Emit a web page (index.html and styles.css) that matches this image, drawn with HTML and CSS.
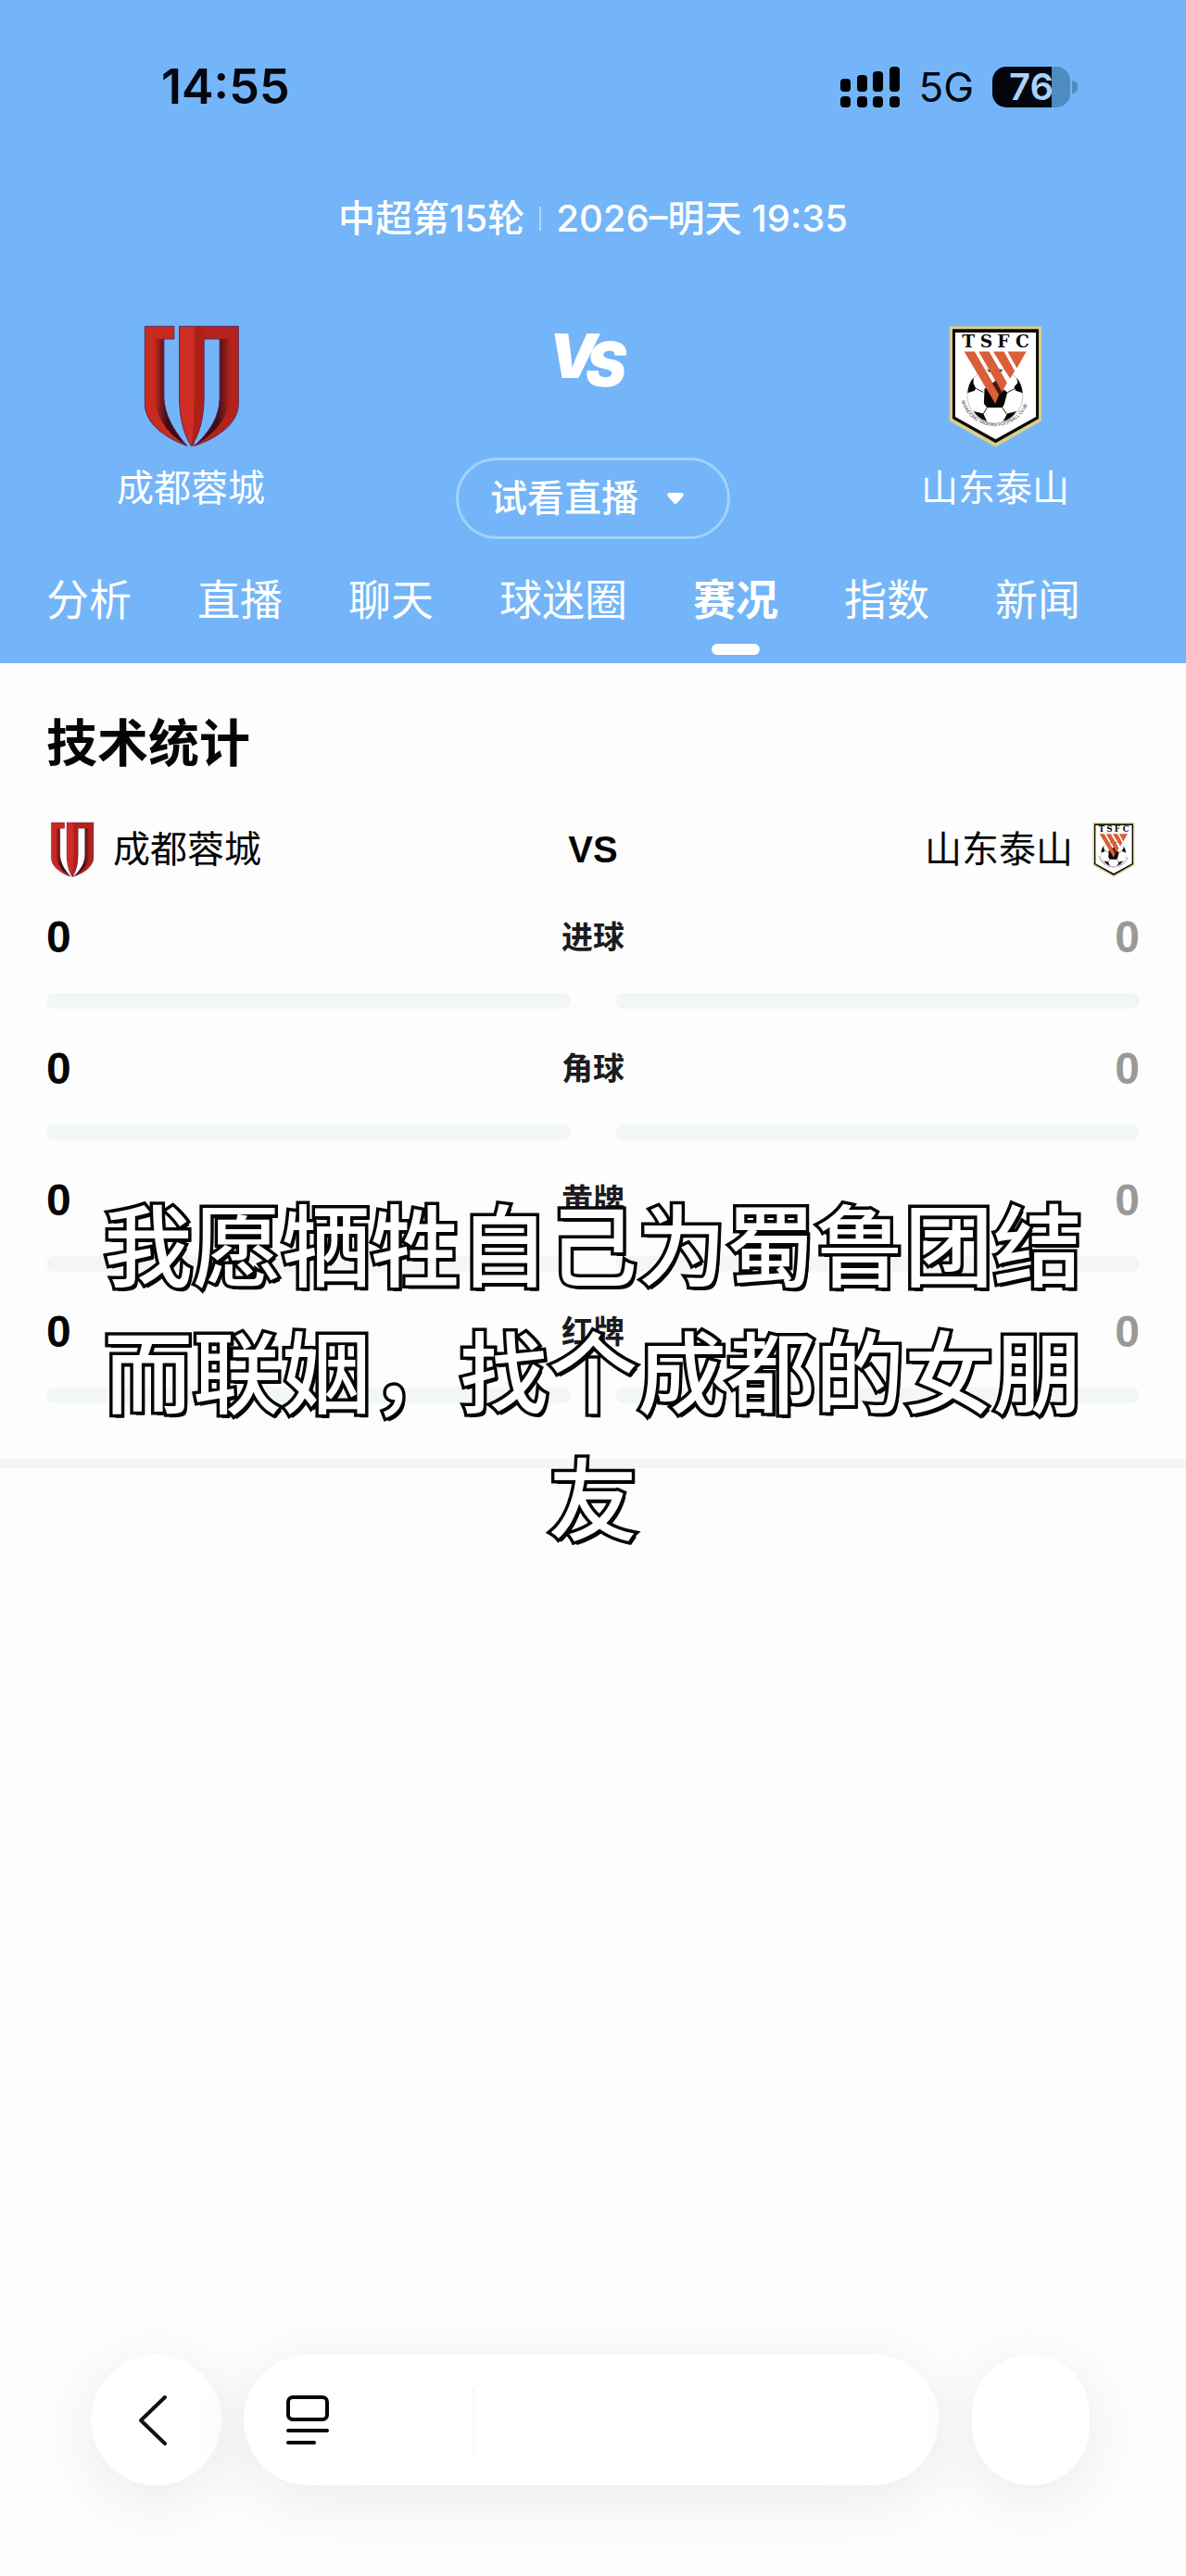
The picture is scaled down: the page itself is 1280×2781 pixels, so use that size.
FILE: index.html
```html
<!DOCTYPE html>
<html lang="zh-CN">
<head>
<meta charset="utf-8">
<meta name="viewport" content="width=device-width, initial-scale=1">
<title>成都蓉城 VS 山东泰山</title>
<link rel="stylesheet" href="styles.css">
</head>
<body>
<svg class="defs" aria-hidden="true">
  <defs>
    <linearGradient id="redLeft" gradientUnits="userSpaceOnUse" x1="200" y1="0" x2="240" y2="0"><stop offset="0" stop-color="#c3281f"/><stop offset="1" stop-color="#3c0d1a"/></linearGradient>
    <linearGradient id="redRight" gradientUnits="userSpaceOnUse" x1="405" y1="0" x2="446" y2="0"><stop offset="0" stop-color="#3c0d1a"/><stop offset="1" stop-color="#b4231b"/></linearGradient>
    <symbol id="crest-chengdu" viewBox="160 60 320 400">
      <path d="M169 67H264V108H231V300C234 355 262 405 306 455C238 430 169 385 169 318Z" fill="#c82a20"/>
      <path d="M200 108H231V300C234 355 262 405 306 455C256 425 207 375 200 300Z" fill="url(#redLeft)"/>
      <path d="M281 67H473V318C473 385 400 432 330 455C385 405 411 355 412 300V108H361V300C360 370 345 420 320 456C297 420 282 370 281 300Z" fill="#b4231b"/>
      <path d="M281 67H330V456H320C297 420 282 370 281 300Z" fill="#cf2d23"/>
      <path d="M330 67H361V300C360 370 345 420 320 456C328 400 330 350 330 300Z" fill="#ae2018"/>
      <path d="M412 108H446V300C440 365 392 420 330 455C385 405 411 355 412 300Z" fill="url(#redRight)"/>
      <path d="M169 67H264V108H231V300C234 355 262 405 306 455C238 430 169 385 169 318ZM281 67H473V318C473 385 400 432 330 455C385 405 411 355 412 300V108H361V300C360 370 345 420 320 456C297 420 282 370 281 300Z" fill="none" stroke="#5b2a5e" stroke-width="3"/>
    </symbol>
    <symbol id="crest-shandong" viewBox="180 60 320 400">
      <path d="M190 67H489V374L340 459L190 374Z" fill="#d9cf8e"/>
      <path d="M200 76H480V367L340 446L200 367Z" fill="#0c0707"/>
      <path d="M209 87H471V361L340 434L209 361Z" fill="#fff"/>
      <text x="231 290 345 405" y="135" class="crest-name">TSFC</text>
      <circle cx="338" cy="292" r="90" fill="#fff" stroke="#555" stroke-width="1"/>
      <path d="M312 210Q338 202 364 210L350 217H325ZM268 234Q252 252 249 283L272 276 276 268 268 252ZM408 234Q424 252 428 283L405 276 400 264 412 250ZM304 270L326 255 372 276 378 282 368 320 362 331H312L302 318ZM268 343L300 350 312 376Q286 368 268 343ZM408 343L378 350 364 376Q392 368 408 343Z" fill="#080505"/>
      <path d="M276 268L300 281M378 282L405 268M312 331L300 352M362 331L376 352" stroke="#222" stroke-width="3"/>
      <path d="M238 149H272L352 287 339 318ZM285 149H319L377 250 361 282ZM332 149H367L402 212 387 237ZM379 149H440L409 203Z" fill="#d95f38"/>
      <path d="M329 252L341 243 361 282 352 291Z" fill="#4a1712"/>
      <path id="crest-arc" d="M229 308A113 113 0 0 0 447 308" fill="none"/>
      <text class="crest-ring"><textPath href="#crest-arc">SHANDONG TAISHAN FOOTBALL CLUB</textPath></text>
    </symbol>
  </defs>
</svg>

<header class="hero">
  <div class="status">
    <time class="clock">14:55</time>
    <div class="status-icons">
      <svg class="signal" viewBox="0 0 64 44" aria-hidden="true"><rect x="0" y="13" width="11" height="14" rx="4"/><rect x="18" y="9" width="11" height="18" rx="4"/><rect x="35" y="5" width="11" height="22" rx="4"/><rect x="53" y="0" width="11" height="27" rx="4"/><rect x="0" y="32" width="11" height="12" rx="4"/><rect x="18" y="32" width="11" height="12" rx="4"/><rect x="35" y="32" width="11" height="12" rx="4"/><rect x="53" y="32" width="11" height="12" rx="4"/></svg>
      <span class="network">5G</span>
      <span class="battery"><span class="battery-cell">76</span><span class="battery-tip"></span></span>
    </div>
  </div>

  <p class="fixture"><span>中超第15轮</span><i class="fixture-rule"></i><span>2026–明天 19:35</span></p>

  <div class="match">
    <div class="team">
      <svg class="crest"><use href="#crest-chengdu"/></svg>
      <span>成都蓉城</span>
    </div>
    <div class="versus">
      <svg class="versus-mark" viewBox="0 0 100 80" role="img" aria-label="VS"><text x="2" y="58">V</text><text x="42" y="67">S</text></svg>
      <button class="watch" type="button">试看直播<svg class="caret" viewBox="0 0 20 14" aria-hidden="true"><path d="M3 1H17Q20 2 18 5L12 12Q10 14 8 12L2 5Q0 2 3 1Z"/></svg></button>
    </div>
    <div class="team">
      <svg class="crest"><use href="#crest-shandong"/></svg>
      <span>山东泰山</span>
    </div>
  </div>

  <nav class="tabs">
    <a href="#">分析</a><a href="#">直播</a><a href="#">聊天</a><a href="#">球迷圈</a><a href="#" class="active" aria-current="page">赛况</a><a href="#">指数</a><a href="#">新闻</a>
  </nav>
</header>

<main class="stats">
  <h1>技术统计</h1>
  <div class="sides">
    <div class="side"><svg class="crest-small"><use href="#crest-chengdu"/></svg><span>成都蓉城</span></div>
    <strong>VS</strong>
    <div class="side side-away"><span>山东泰山</span><svg class="crest-small"><use href="#crest-shandong"/></svg></div>
  </div>
  <div class="stat"><b>0</b><span>进球</span><b class="away">0</b><i class="bar"></i><i class="bar"></i></div>
  <div class="stat"><b>0</b><span>角球</span><b class="away">0</b><i class="bar"></i><i class="bar"></i></div>
  <div class="stat"><b>0</b><span>黄牌</span><b class="away">0</b><i class="bar"></i><i class="bar"></i></div>
  <div class="stat"><b>0</b><span>红牌</span><b class="away">0</b><i class="bar"></i><i class="bar"></i></div>
  <p class="caption">我愿牺牲自己为蜀鲁团结而联姻，找个成都的女朋友</p>
</main>

<footer class="toolbar">
  <button class="round" type="button" aria-label="返回"><svg class="chevron" viewBox="0 0 32 56"><path d="M29 3L3 28L29 53"/></svg></button>
  <div class="pill">
    <button class="cards" type="button" aria-label="列表"><svg class="cards-icon" viewBox="0 0 46 54"><rect x="2" y="2" width="42" height="24" rx="5"/><path d="M2 38H44M2 51H30"/></svg></button>
    <i class="pill-rule"></i>
  </div>
  <button class="round round-small" type="button" aria-label="更多"></button>
</footer>
</body>
</html>
```
FILE: styles.css
```css
* { box-sizing: border-box; }

body {
  margin: 0;
  min-height: 100vh;
  display: flex;
  flex-direction: column;
  background: #fdfdfd;
  color: #050505;
  font-family: Inter, "Noto Sans CJK SC", sans-serif;
  font-size: 40px;
  line-height: 48px;
}

p, h1 { margin: 0; }
a { color: inherit; text-decoration: none; }
button { border: 0; background: none; padding: 0; font: inherit; color: inherit; }
.defs { position: absolute; width: 0; height: 0; }

/* Header */
.hero {
  background: #73b5f8;
  color: #fff;
  padding-top: 64px;
}

.status {
  display: flex;
  justify-content: space-between;
  align-items: center;
  height: 60px;
  padding: 0 117px 0 174px;
  color: #03060c;
}
.clock { font-size: 52px; font-weight: 600; }
.status-icons { display: flex; align-items: center; gap: 20px; }
.signal { width: 64px; height: 44px; }
.network { font-size: 44px; }
.battery { display: flex; align-items: center; gap: 2px; }
.battery-cell {
  width: 84px;
  height: 44px;
  border-radius: 15px;
  background: linear-gradient(90deg, #03060c 64px, #4f8bc0 64px);
  color: #a8d2fb;
  font-size: 40px;
  font-weight: 600;
  line-height: 44px;
  text-align: center;
}
.battery-tip { width: 6px; height: 14px; border-radius: 0 6px 6px 0; background: #4f8bc0; }

.fixture {
  display: flex;
  justify-content: center;
  align-items: center;
  gap: 16px;
  margin-top: 88px;
  font-weight: 500;
}
.fixture-rule { width: 2px; height: 26px; background: #b4d8fb; }

.match {
  display: flex;
  justify-content: space-between;
  padding: 90px 126px 0;
}
.team { display: flex; flex-direction: column; align-items: center; gap: 20px; }
.crest { width: 107px; height: 133px; }
.crest-name { font: 700 56px "DejaVu Serif", serif; fill: #0c0707; }
.crest-ring { font: 15px "Liberation Sans", sans-serif; fill: #333; }

.versus { display: flex; flex-direction: column; align-items: center; }
.versus-mark { width: 100px; height: 80px; margin-bottom: 64px; fill: #fff; font-size: 66px; font-weight: 900; font-style: italic; }
.watch {
  display: flex;
  align-items: center;
  justify-content: center;
  gap: 30px;
  width: 296px;
  height: 88px;
  padding-right: 12px;
  border: 3px solid #a3d2fc;
  border-radius: 44px;
  font-weight: 500;
}
.caret { width: 20px; height: 14px; fill: #fff; }

.tabs {
  display: flex;
  gap: 71px;
  padding: 37px 50px 0;
  font-size: 46px;
  line-height: 56px;
}
.tabs a { display: flex; flex-direction: column; align-items: center; gap: 20px; height: 97px; }
.tabs .active { font-weight: 700; }
.active::after { content: ""; width: 52px; height: 12px; border-radius: 6px; background: #fff; }

/* Statistics */
.stats {
  position: relative;
  padding: 50px 50px 60px;
  border-bottom: 10px solid #f4f5f9;
}
h1 { font-size: 55px; font-weight: 700; line-height: 72px; }
.sides {
  display: grid;
  grid-template-columns: 1fr auto 1fr;
  align-items: center;
  height: 60px;
  margin-top: 49px;
}
.sides strong { font-family: "Liberation Sans", sans-serif; }
.side { display: flex; align-items: center; gap: 20px; padding-left: 4px; }
.side-away { justify-content: flex-end; padding: 0 4px 0 0; }
.crest-small { width: 48px; height: 60px; }

.stat {
  display: grid;
  grid-template-columns: 1fr auto 1fr;
  align-items: center;
  row-gap: 30px;
  margin-top: 35px;
}
.stat b { font-family: "Liberation Sans", sans-serif; font-size: 48px; line-height: 60px; }
.stat span { width: 68px; margin: 0 auto; font-size: 34px; font-weight: 700; white-space: nowrap; color: #1b1b20; }
.stat .away { text-align: right; color: #999; }
.bar { height: 17px; border-radius: 9px; background: #f3f6f7; }
.bar:nth-last-child(2) { grid-column: 1; margin-right: -10px; }
.bar:last-child { grid-column: 3; margin-left: -10px; }

/* Caption laid over the lower statistics */
.caption {
  position: absolute;
  top: 562px;
  left: 0;
  right: 0;
  width: 1060px;
  max-width: 100%;
  margin: 0 auto;
  color: #fff;
  font-size: 96px;
  font-weight: 500;
  line-height: 137px;
  text-align: center;
  paint-order: stroke fill;
  -webkit-text-stroke: 7px #050505;
  text-shadow: 3px 4px 0 #050505;
}

/* Bottom controls */
.toolbar {
  display: flex;
  align-items: center;
  gap: 24px;
  margin-top: auto;
  padding: 0 104px 98px 98px;
}
.round, .pill { box-shadow: 0 14px 70px rgba(0, 0, 0, .08); background: #fff; }
.round { display: grid; place-items: center; width: 141px; height: 141px; padding-right: 8px; border-radius: 50%; }
.round-small { width: 127px; border-radius: 64px; margin-left: 12px; }
.pill { display: flex; align-items: center; flex: 1; height: 141px; border-radius: 71px; padding-left: 46px; }
.chevron { width: 32px; height: 56px; fill: none; stroke: #111; stroke-width: 4; stroke-linecap: round; stroke-linejoin: round; }
.cards-icon { display: block; width: 46px; height: 54px; fill: none; stroke: #050505; stroke-width: 4; stroke-linecap: round; }
.pill-rule { width: 4px; height: 70px; margin-left: 154px; background: #fafafa; }
```
